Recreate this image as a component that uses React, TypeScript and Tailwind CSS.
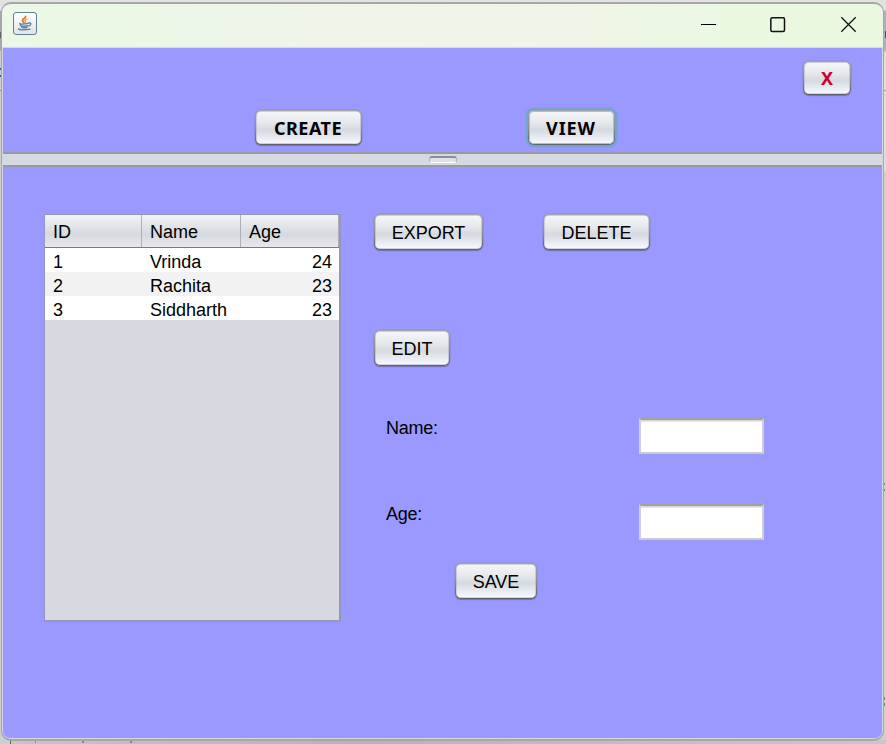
import type { ReactNode } from "react";

function NimbusButton({
  children,
  className = "",
  focused = false,
}: {
  children: ReactNode;
  className?: string;
  focused?: boolean;
}) {
  return (
    <button
      type="button"
      className={`flex shrink-0 items-center justify-center rounded-[6px] border border-transparent text-[18px] leading-none [background:linear-gradient(#f6f7f9,#e6e8ec_35%,#d6d9df_57%,#e6e9ef_78%,#f8faff)_padding-box,linear-gradient(#a2a4b0,#8c8e98_50%,#5f616b)_border-box] ${
        focused
          ? "shadow-[inset_0_0_0_1px_#b9bcc5,0_0_0_2px_#73a4d1,0_0_1px_3px_#8b9ee8]"
          : "shadow-[inset_0_0_0_0.5px_#a9acb6,0_1px_1px_#7272ac,0_0_0_0.5px_#8e8fce]"
      } ${className}`}
    >
      {children}
    </button>
  );
}

function JavaIcon() {
  return (
    <span className="flex h-[23px] w-6 items-center justify-center rounded-[3px] border border-[#5f8091] bg-linear-to-b from-white to-[#e1e4e8]">
      <svg width="16" height="18" viewBox="0 0 16 18" fill="none" strokeLinecap="round">
        <path d="M8.6 2.4C9.1 4.4 5 4.8 5.5 6.8C5.7 7.5 6.7 7.6 6.6 8.3" stroke="#e87817" strokeWidth="1.8" />
        <path d="M10 5C8.1 5.5 7.5 6 8.3 7C8.8 7.6 8.5 8 8 8.4" stroke="#f08a35" strokeWidth="1.2" />
        <path d="M2.9 9.5C1.8 10.2 5 10.4 10.7 9.7M3.6 11.3C3.1 12.3 7.1 12.6 10.4 11.7M4.9 13.1C4.4 14 8 14 10 13.3M11.5 9C15.2 8.4 14.1 11.5 11.3 12.1" stroke="#527c9c" strokeWidth="1.3" />
        <path d="M2 14.6C0 16 7 16.4 13 15.2" stroke="#527c9c" strokeWidth="1.3" />
      </svg>
    </span>
  );
}

const rows = [
  { id: "1", name: "Vrinda", age: 24 },
  { id: "2", name: "Rachita", age: 23 },
  { id: "3", name: "Siddharth", age: 23 },
];

const columns = ["ID", "Name", "Age"];

function PeopleTable() {
  return (
    <div className="mt-[47px] h-[408px] w-[297px] shrink-0 border border-r-2 border-b-2 border-[#9297bb] bg-[#d6d9df]">
      <div className="grid h-[33px] grid-cols-[97px_99px_98px] border-b border-[#777982] bg-linear-to-b from-[#f2f3f5] via-[#d6d9df] via-60% to-[#e6e8ed]">
        {columns.map((column) => (
          <div key={column} className="border-r border-[#adb0b8] pt-[7px] pl-2 leading-[21px]">
            {column}
          </div>
        ))}
      </div>
      <div>
        {rows.map((row) => (
          <div
            key={row.id}
            className="grid h-6 grid-cols-[97px_99px_98px] pt-[3px] leading-[23px] odd:bg-white even:bg-[#f2f2f2]"
          >
            <span className="pl-2">{row.id}</span>
            <span className="pl-2">{row.name}</span>
            <span className="pr-[7px] text-right">{row.age}</span>
          </div>
        ))}
      </div>
    </div>
  );
}

function Field({ label }: { label: string }) {
  return (
    <label className="flex w-[378px] items-start justify-between">
      <span className="leading-5 tracking-[-0.25px]">{label}</span>
      <input
        aria-label={label}
        className="h-9 w-[125px] border-2 border-t-[#a2a2a6] border-r-[#d0d0d4] border-b-[#cacacf] border-l-[#d0d0d4] bg-white px-1 shadow-[inset_0_1px_0_#d4d4d4,inset_0_2px_0_#e9e9e9] outline-none"
      />
    </label>
  );
}

function Backdrop() {
  return (
    <div className="absolute inset-0 bg-[#cfcfcf]" aria-hidden="true">
      <div className="absolute top-0 left-0 h-2.5 w-full bg-[#e2e2e2]" />
      <div className="absolute top-[11px] left-0 h-10 w-1 bg-[#a4a7ac]" />
      <div className="absolute top-8 left-0 h-1.5 w-0.5 bg-[#665f61]" />
      <div className="absolute top-[68px] left-0 h-[2px] w-px bg-[#2863a0]" />
      <div className="absolute top-[75px] left-0 h-[2px] w-px bg-[#2863a0]" />
      <div className="absolute top-[90px] left-0 h-px w-1 bg-[#888]" />
      <div className="absolute top-[11px] right-0 h-10 w-1 bg-[#a9b2bd]" />
      <div className="absolute top-[31px] right-0 h-[7px] w-px bg-[#285b94]" />
      <div className="absolute top-[52px] right-0 h-[120px] w-1 bg-[#dedede]" />
      <div className="absolute top-[90px] right-0 h-px w-1 bg-[#a0a0a0]" />
      <div className="absolute top-[483px] right-px h-2 w-0.5 border-y-2 border-[#399aa5]" />
      <div className="absolute top-[697px] right-px h-[9px] w-0.5 border-y-[3px] border-[#399aa5]" />
      <div className="absolute bottom-0 left-[10px] h-[5px] w-px bg-[#626262]" />
      <div className="absolute bottom-0 left-[11px] h-1 w-[875px] bg-linear-to-r from-[#c5c5c5] via-[#b5b5b5] via-40% to-[#c8c8c8]" />
      <div className="absolute bottom-px left-[35px] h-1 w-px bg-[#858585]" />
      <div className="absolute bottom-px left-[82px] h-1 w-0.5 bg-[#858585]" />
      <div className="absolute bottom-px left-[130px] h-1 w-0.5 bg-[#858585]" />
    </div>
  );
}

export default function App() {
  return (
    <div className="relative h-[744px] w-[886px] overflow-hidden pt-[2px] pl-px font-['Liberation_Sans',Arial,sans-serif] text-[18px] text-black">
      <Backdrop />
      <main className="relative flex h-[739px] w-[883px] flex-col overflow-hidden rounded-[10px] border border-t-2 border-b-2 border-[#a7a7a7] bg-[#9999ff]">
        <header className="flex h-11 shrink-0 items-center border-b border-[#d5d9dc] bg-linear-to-r from-[#eaf8e5] via-[#f1f4e8] via-60% to-[#eaf8e2] to-82% pl-[11px]">
          <div className="-mt-[5px]">
            <JavaIcon />
          </div>
          <div className="mr-[26px] ml-auto flex items-center pb-[2px]">
            <svg width="16" height="17" viewBox="0 0 16 17" stroke="#000" strokeWidth="1">
              <path d="M0 8.5h15" />
            </svg>
            <svg className="ml-[53px]" width="16" height="17" viewBox="0 0 16 17" fill="none" stroke="#111" strokeWidth="1.5">
              <rect x=".8" y="1.8" width="13.7" height="13.7" rx="1.5" />
            </svg>
            <svg className="ml-[54px]" width="17" height="17" viewBox="0 0 17 17" fill="none" stroke="#111" strokeWidth="1.3">
              <path d="m1.3 1.3 14.4 14.4m0-14.4L1.3 15.7" />
            </svg>
          </div>
        </header>
        <div className="flex min-h-0 flex-1 flex-col rounded-b-[8px] border-x border-b border-[#d6d6df]">
          <nav className="flex h-[104px] shrink-0 flex-col pt-[13px] font-['Noto_Sans','Open_Sans',sans-serif] font-bold">
            <div className="flex justify-end pr-[31px]">
              <NimbusButton className="h-[34px] w-[48px] pb-px text-[#cc0033]">X</NimbusButton>
            </div>
            <div className="mt-[15px] flex gap-[166px] pl-[252px]">
              <NimbusButton className="h-[35px] w-[107px] pr-px">
                <span className="text-[18px] tracking-[0.5px]">CREATE</span>
              </NimbusButton>
              <NimbusButton className="h-[35px] w-[87px] pr-px" focused>
                <span className="text-[18px] tracking-[0.9px]">VIEW</span>
              </NimbusButton>
            </div>
          </nav>
          <div className="flex h-[15px] shrink-0 items-center justify-center border-y-2 border-[#9899a8] bg-[#d6d9df]">
            <span className="h-[7px] w-7 rounded-[3px] border border-t-2 border-[#afb2b8] border-t-[#8b8e95] border-b-white bg-[#dfe1e6]" />
          </div>
          <section className="flex flex-1 pl-[41px]">
            <PeopleTable />
            <div className="ml-[33px] flex flex-col pt-[47px]">
              <div className="flex gap-[60px]">
                <NimbusButton className="h-9 w-[109px] pt-px">EXPORT</NimbusButton>
                <NimbusButton className="h-9 w-[107px] pt-px">DELETE</NimbusButton>
              </div>
              <NimbusButton className="mt-[80px] h-9 w-[76px] pt-px">EDIT</NimbusButton>
              <div className="mt-[52px] ml-3 flex flex-col gap-[50px]">
                <Field label="Name:" />
                <Field label="Age:" />
              </div>
              <NimbusButton className="mt-[23px] ml-[81px] h-9 w-[82px] pt-[2px]">SAVE</NimbusButton>
            </div>
          </section>
        </div>
      </main>
    </div>
  );
}
